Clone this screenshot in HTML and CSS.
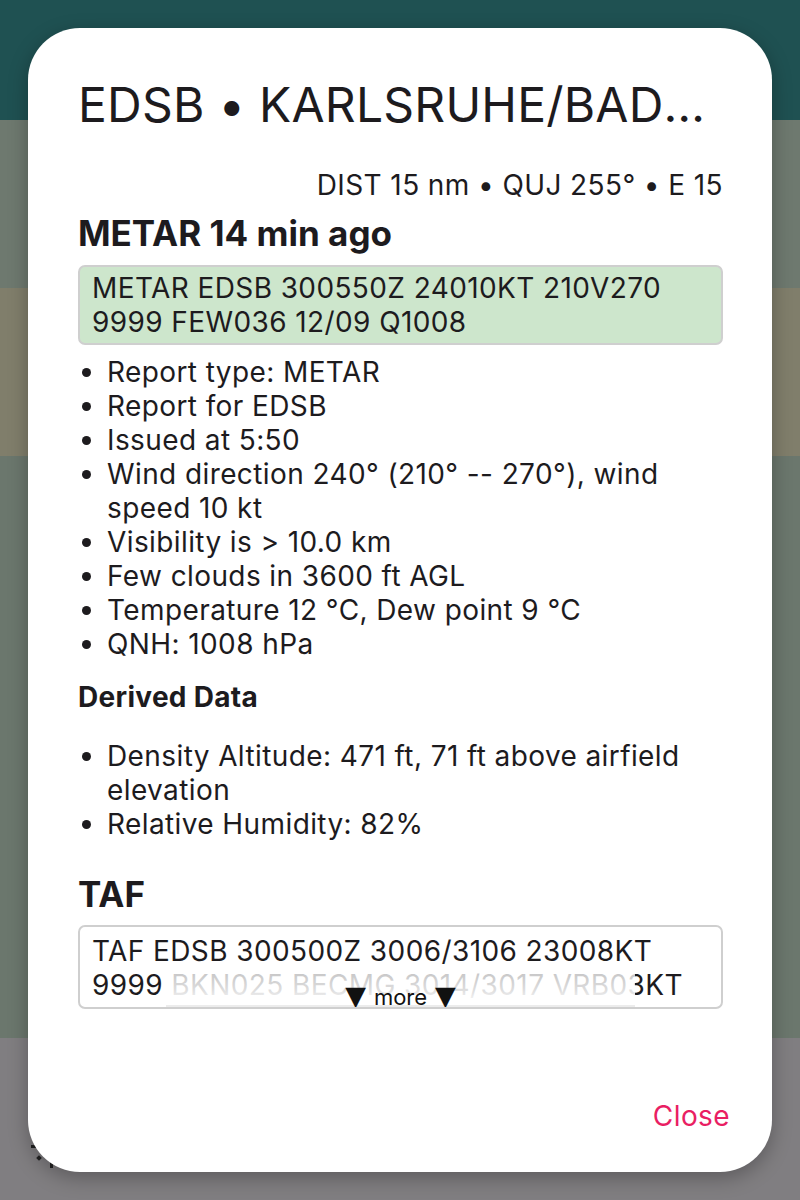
FILE: index.html
```html
<!DOCTYPE html>
<html>
<head>
<meta charset="utf-8">
<link rel="stylesheet" href="styles.css">
</head>
<body>
<div class="map">
  <div class="band band-top"></div>
  <div class="band band-a"></div>
  <div class="band band-b"></div>
  <div class="band band-c"></div>
  <div class="band band-d">
    <svg class="loc-icon" width="40" height="40" viewBox="0 0 40 40">
      <rect x="3" y="5" width="6" height="3" fill="#222"/>
      <rect x="9" y="16" width="4" height="4" fill="#222" transform="rotate(45 11 18)"/>
      <rect x="22" y="22" width="3" height="6" fill="#222"/>
    </svg>
  </div>
</div>

<div class="dialog">
  <h1 class="title">EDSB • KARLSRUHE/BADEN-BADEN</h1>
  <div class="meta">DIST 15 nm • QUJ 255° • E 15</div>
  <h2 class="section">METAR 14 min ago</h2>
  <div class="raw raw-metar">METAR EDSB 300550Z 24010KT 210V270 9999 FEW036 12/09 Q1008</div>
  <ul class="list">
    <li>Report type: METAR</li>
    <li>Report for EDSB</li>
    <li>Issued at 5:50</li>
    <li>Wind direction 240° (210° -- 270°), wind speed 10 kt</li>
    <li>Visibility is &gt; 10.0 km</li>
    <li>Few clouds in 3600 ft AGL</li>
    <li>Temperature 12 °C, Dew point 9 °C</li>
    <li>QNH: 1008 hPa</li>
  </ul>
  <h3 class="sub">Derived Data</h3>
  <ul class="list list-derived">
    <li>Density Altitude: 471 ft, 71 ft above airfield elevation</li>
    <li>Relative Humidity: 82%</li>
  </ul>
  <h2 class="section taf-head">TAF</h2>
  <div class="raw raw-taf">
    <div class="taf-text">TAF EDSB 300500Z 3006/3106 23008KT 9999 BKN025 BECMG 3014/3017 VRB03KT CAVOK</div>
    <div class="more">
      <div class="more-inner"><span class="tri">▼</span><span class="more-label">more</span><span class="tri">▼</span></div>
    </div>
  </div>
  <div class="actions">
    <button class="close">Close</button>
  </div>
</div>
</body>
</html>
```
FILE: styles.css
```css
html, body {
  margin: 0;
  padding: 0;
}
body {
  width: 800px;
  height: 1200px;
  overflow: hidden;
  font-family: Inter, "Noto Sans", sans-serif;
  color: #1d1b1e;
}
.map {
  display: flex;
  flex-direction: column;
  height: 1200px;
}
.band-top { height: 120px; background: #1f5152; }
.band-a { height: 168px; background: #6e796f; }
.band-b { height: 168px; background: #807e6b; }
.band-c { height: 582px; background: #6b776d; }
.band-d { flex: 1; background: #807e81; position: relative; }
.loc-icon {
  position: absolute;
  left: 28px;
  top: 102px;
}
.dialog {
  position: absolute;
  left: 28px;
  top: 28px;
  width: 744px;
  height: 1144px;
  box-sizing: border-box;
  background: #fff;
  border-radius: 52px;
  box-shadow: 0 6px 20px rgba(0,0,0,0.28);
  padding: 49px 49px 0 50px;
  display: flex;
  flex-direction: column;
}
.title {
  margin: 0;
  font-size: 48px;
  font-weight: 400;
  line-height: 56px;
  letter-spacing: 0.2px;
  white-space: nowrap;
  overflow: hidden;
  text-overflow: ellipsis;
  max-width: 632px;
}
.meta {
  margin-top: 35px;
  text-align: right;
  font-size: 28px;
  line-height: 34px;
  letter-spacing: 0.4px;
}
.section {
  margin: 11px 0 0;
  font-size: 35px;
  font-weight: 700;
  line-height: 40px;
  letter-spacing: 0;
}
.raw {
  margin-top: 12px;
  border: 2px solid #cfcfcf;
  border-radius: 7px;
  padding: 4px 12px;
  font-size: 28px;
  line-height: 34px;
  letter-spacing: 0.4px;
}
.raw-metar {
  background: #cde6cc;
}
.list {
  margin: 10px 0 0;
  padding: 0 0 0 29px;
  font-size: 28px;
  line-height: 34px;
  letter-spacing: 0.4px;
}
.sub {
  margin: 19px 0 0;
  font-size: 28px;
  font-weight: 700;
  line-height: 34px;
  letter-spacing: 0.3px;
}
.list-derived {
  margin-top: 25px;
}
.taf-head {
  margin-top: 33px;
}
.raw-taf {
  position: relative;
  height: 84px;
  box-sizing: border-box;
  overflow: hidden;
  padding-top: 7px;
  margin-top: 11px;
}
.more {
  position: absolute;
  left: 86px;
  right: 86px;
  bottom: 0;
  height: 40px;
  box-sizing: border-box;
  background: linear-gradient(to bottom, rgba(255,255,255,0.72), rgba(255,255,255,0.85) 60%, rgba(255,255,255,1));
  border-bottom: 2px solid #ececec;
  display: flex;
  justify-content: center;
  align-items: flex-end;
  color: #111;
  letter-spacing: 0;
}
.more-inner {
  display: flex;
  align-items: baseline;
  gap: 8px;
  margin-bottom: -3px;
}
.more-label {
  font-size: 22px;
  line-height: 22px;
}
.tri {
  font-family: "DejaVu Sans", sans-serif;
  font-size: 27px;
  line-height: 22px;
}
.actions {
  margin-top: auto;
  margin-bottom: 39px;
  display: flex;
  justify-content: flex-end;
  margin-right: -7px;
}
.close {
  background: none;
  border: none;
  font-family: Inter, "Noto Sans", sans-serif;
  font-size: 28px;
  letter-spacing: 0.4px;
  color: #e91e63;
  padding: 0;
  line-height: 34px;
}
```
